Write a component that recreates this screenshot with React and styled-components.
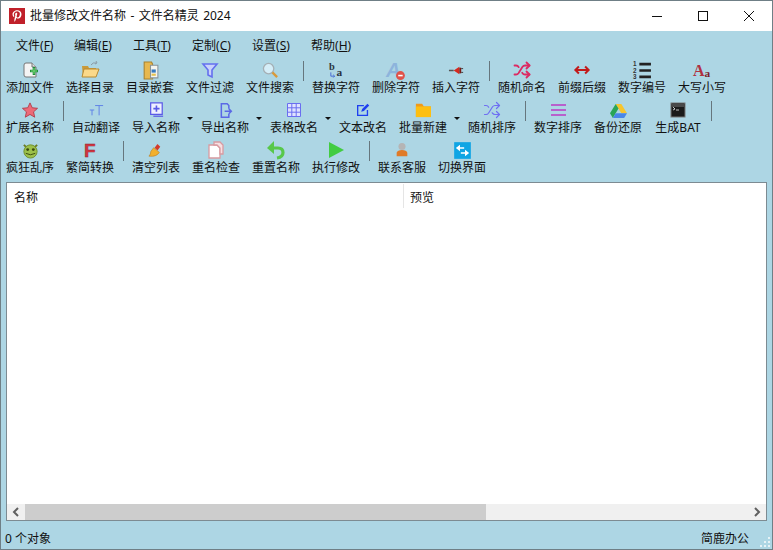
import React from "react";
import styled, { createGlobalStyle } from "styled-components";
import { FaPinterestP } from "react-icons/fa";
import { Shuffle } from "lucide-react";

const GlobalStyle = createGlobalStyle`
  html, body { margin: 0; padding: 0; }
  body { font-family: "Noto Sans", "Noto Sans CJK SC", sans-serif; font-size: 12px; color: #111; }
`;

const Window = styled.div`
  position: relative;
  width: 773px;
  height: 550px;
  box-sizing: border-box;
  display: flex;
  flex-direction: column;
  background: #add6e4;
  box-shadow: inset 0 0 0 1px #6f7f86;
  overflow: hidden;
`;
const TitleBar = styled.div`
  height: 30px;
  margin: 1px 1px 0;
  flex: none;
  display: flex;
  align-items: center;
  background: #fff;
`;
const AppLogo = styled.span`
  width: 16px;
  height: 16px;
  margin-left: 8px;
  background: #c0202a;
  color: #fff;
  display: flex;
  align-items: center;
  justify-content: center;
  font-size: 12px;
`;
const TitleText = styled.span`
  margin-left: 5px;
  flex: 1;
  line-height: 30px;
  word-spacing: 1.3px;
`;
const WinButton = styled.button`
  width: 46px;
  height: 30px;
  padding: 0;
  border: 0;
  background: transparent;
  display: flex;
  align-items: center;
  justify-content: center;
`;
const MenuBar = styled.div`
  height: 27px;
  flex: none;
  display: flex;
  align-items: center;
  padding-left: 16px;
`;
const MenuItem = styled.span`
  width: 59px;
  flex: none;
  white-space: nowrap;
  u { text-underline-offset: 1px; }
  &:first-child { width: 58px; }
  &:nth-child(4) { width: 60px; }
`;
const ToolRow = styled.div`
  height: 40px;
  flex: none;
  display: flex;
`;
const ToolButton = styled.div`
  width: 60px;
  flex: none;
  display: flex;
  flex-direction: column;
  align-items: center;
`;
const IconBox = styled.span`
  height: 20px;
  margin-top: 2px;
  display: flex;
  align-items: center;
  justify-content: center;
`;
const ToolLabel = styled.span`
  height: 18px;
  margin-top: -1px;
  line-height: 18px;
  white-space: nowrap;
`;
const Separator = styled.span`
  width: 6px;
  flex: none;
  height: 20px;
  margin-top: 3px;
  display: flex;
  justify-content: center;
  &::before {
    content: "";
    width: 1px;
    background: #66767d;
  }
`;
const DropArrow = styled.span`
  width: 9px;
  flex: none;
  &::before {
    content: "";
    display: block;
    width: 0;
    margin: 19px 0 0 1px;
    border-left: 3px solid transparent;
    border-right: 3px solid transparent;
    border-top: 3px solid #111;
  }
`;
const ListPanel = styled.div`
  margin: 4px 6px 0;
  height: 339px;
  flex: none;
  box-sizing: border-box;
  border: 1px solid #7d8b92;
  background: #fff;
  display: flex;
  flex-direction: column;
`;
const ListHeader = styled.div`
  height: 29px;
  flex: none;
  display: grid;
  grid-template-columns: 397px 1fr;
`;
const HeaderCell = styled.div`
  padding-left: ${(p) => p.$pad}px;
  line-height: 27px;
  height: 24px;
  margin-top: 1px;
  border-right: ${(p) => (p.$divider ? "1px solid #e5e5e5" : "0")};
`;
const ListBody = styled.div`
  flex: 1;
`;
const ScrollBar = styled.div`
  height: 16px;
  flex: none;
  display: flex;
  background: #f0f0f0;
`;
const ScrollEnd = styled.span`
  width: 18px;
  flex: none;
  display: flex;
  align-items: center;
  justify-content: center;
`;
const ScrollTrack = styled.div`
  flex: 1;
`;
const ScrollThumb = styled.div`
  width: 461px;
  height: 100%;
  background: #cdcdcd;
`;
const StatusBar = styled.div`
  flex: 1;
  display: flex;
  align-items: center;
  justify-content: space-between;
  padding: 4px 24px 0 5px;
`;
const Grip = styled.svg`
  position: absolute;
  right: 2px;
  bottom: 2px;
`;

const Svg = ({ children, size = 17 }) => (
  <svg width={size} height={size} viewBox="1 1 18 18" overflow="visible">{children}</svg>
);

const icons = {
  addFile: (
    <Svg size={18}>
      <path d="M6 3h6l4 4v10H6q-2 0-2-2V5q0-2 2-2z" fill="#f4f4f4" stroke="#777" />
      <path d="M12 3v4h4" fill="#ddd" stroke="#777" />
      <path d="M14 7v8M10 11h8" stroke="#1f8f3a" strokeWidth="2.6" />
      <path d="M14 8v6M11 11h6" stroke="#7fdc7a" strokeWidth="1" />
    </Svg>
  ),
  folderOpen: (
    <Svg size={18}>
      <path d="M2 6h6l1 2h7v9H3z" fill="#c99a3a" />
      <path d="M4 9h15l-3 8H2z" fill="#fbd98a" stroke="#b98a30" />
      <path d="M11 5q2-3 5-2M16 1l1 2-2 1" fill="none" stroke="#8a9aa5" />
    </Svg>
  ),
  folderNest: (
    <Svg size={19}>
      <path d="M4 2h7l1 2v14H4z" fill="#e8b84e" stroke="#a9812c" />
      <path d="M10 5h7v12h-7z" fill="#f5f5f0" stroke="#8a949a" />
      <path d="M11 9h4v3h-4z" fill="#3a7cc0" />
      <path d="M11 13h4v2h-4z" fill="#e6c04c" />
    </Svg>
  ),
  funnel: (
    <Svg size={18}>
      <path d="M3 4h14l-5 6v7l-4-2v-5z" fill="#c9d2fb" stroke="#6470ee" strokeWidth="1.6" />
    </Svg>
  ),
  search: (
    <Svg>
      <circle cx="8" cy="8" r="5.5" fill="#d5eef8" stroke="#a5b0b5" strokeWidth="1.4" />
      <path d="M12 12l5 5" stroke="#d99a3a" strokeWidth="2.4" />
    </Svg>
  ),
  replace: (
    <Svg>
      <text x="2" y="10" fontFamily="Liberation Serif, serif" fontWeight="700" fontSize="11" fill="#2b3340">b</text>
      <text x="10" y="16" fontFamily="Liberation Serif, serif" fontWeight="700" fontSize="12" fill="#2b3340">a</text>
      <path d="M4 12v4h4M6.500 14.500L8 16l-1.500 1.500" fill="none" stroke="#3c5fd0" strokeWidth="0.9" />
    </Svg>
  ),
  deleteChar: (
    <Svg size={20}>
      <text x="1" y="16" fontFamily="Liberation Sans, sans-serif" fontWeight="700" fontStyle="italic" fontSize="18" fill="#8db4dc">A</text>
      <circle cx="14" cy="15" r="4" fill="#e0524a" />
      <path d="M12 15h4" stroke="#fff" strokeWidth="1.4" />
    </Svg>
  ),
  insertChar: (
    <Svg>
      <path d="M2 10h5" stroke="#555" strokeWidth="1.6" />
      <path d="M7 10l6-4v8z" fill="#d42a20" />
      <path d="M13 7h2v6h-2z" fill="#7a1a14" />
      <path d="M15 8h2M15 12h2" stroke="#333" />
    </Svg>
  ),
  shuffleRed: <Shuffle size={18} color="#dc2a62" strokeWidth={2.4} />,
  shuffleBlue: <Shuffle size={18} color="#6e6ef2" strokeWidth={1.6} />,
  prefix: (
    <Svg size={16}>
      <path d="M3 10h14" stroke="#c21a1a" strokeWidth="2.2" />
      <path d="M6.500 6L2.500 10l4 4M13.500 6l4 4-4 4" fill="none" stroke="#c21a1a" strokeWidth="2.2" />
    </Svg>
  ),
  numbers: (
    <Svg size={19}>
      <g fontFamily="Liberation Sans, sans-serif" fontWeight="700" fontSize="6" fill="#333">
        <text x="1" y="6">1</text>
        <text x="1" y="12">2</text>
        <text x="1" y="18">3</text>
      </g>
      <path d="M7 4h11M7 10h11M7 16h11" stroke="#222" strokeWidth="2.6" />
    </Svg>
  ),
  caseChange: (
    <Svg>
      <text x="0" y="16" fontFamily="Liberation Serif, serif" fontWeight="700" fontSize="17" fill="#b03040">A</text>
      <text x="12" y="17" fontFamily="Liberation Serif, serif" fontWeight="700" fontSize="12" fill="#7a1f2c">a</text>
    </Svg>
  ),
  star: (
    <Svg size={16}>
      <path d="M10 2l2.500 5.500 6 .6-4.500 4 1.300 6L10 15l-5.300 3.100 1.300-6-4.500-4 6-.6z" fill="#ec6a78" stroke="#b03a48" />
    </Svg>
  ),
  fontSize: (
    <Svg size={16}>
      <path d="M3 10h5M5.500 10v6M9 5h9M13.500 5v11" fill="none" stroke="#5f82e6" strokeWidth="1.100" />
    </Svg>
  ),
  importName: (
    <Svg size={16}>
      <path d="M4 2h13v13H4z" fill="#eef0ff" stroke="#5a5ae6" strokeWidth="1.400" />
      <path d="M7 17h11" stroke="#5a5ae6" strokeWidth="1.400" />
      <path d="M7 8.500h7M10.500 5v7" stroke="#5a5ae6" strokeWidth="1.800" />
    </Svg>
  ),
  exportName: (
    <Svg size={15}>
      <path d="M14 8V4l-2-2H5v16h9v-4" fill="none" stroke="#5a68e6" strokeWidth="1.800" />
      <path d="M9 11h8M14 8l3 3-3 3" fill="none" stroke="#5a68e6" strokeWidth="1.800" />
    </Svg>
  ),
  table: (
    <Svg size={18}>
      <path d="M3.500 3.500h13v13h-13zM3.500 7.800h13M3.500 12.200h13M7.800 3.500v13M12.200 3.500v13" fill="#dfe2ff" stroke="#6a6ef0" />
    </Svg>
  ),
  textEdit: (
    <Svg size={16}>
      <path d="M15 10v6H4V5h7" fill="none" stroke="#1e3ff0" strokeWidth="1.500" />
      <path d="M8 12l1-3 6-6 2 2-6 6z" fill="#1e3ff0" />
    </Svg>
  ),
  folder: (
    <Svg size={16}>
      <path d="M2 3h7l2 3h8v12H2z" fill="#f09a1a" />
      <path d="M2 6h17v12H2z" fill="#fdbf11" />
    </Svg>
  ),
  bars: (
    <Svg size={18}>
      <path d="M3 5h15M3 10h15M3 15h15" stroke="#b860cc" strokeWidth="2" />
    </Svg>
  ),
  drive: (
    <Svg size={17}>
      <path d="M7 3h6l6 10h-6z" fill="#f7c52d" />
      <path d="M7 3L1 13l3 5 6-10z" fill="#2aa557" />
      <path d="M7 13h12l-3 5H4z" fill="#4a86e8" />
    </Svg>
  ),
  terminal: (
    <Svg size={18}>
      <rect x="3" y="3" width="14" height="14" fill="#1b1b1b" stroke="#777" />
      <rect x="4" y="4" width="12" height="3" fill="#4a4a4a" />
      <path d="M5 7l2 2-2 1M8 10h3" fill="none" stroke="#eee" strokeWidth="0.800" />
    </Svg>
  ),
  monster: (
    <Svg size={17}>
      <path d="M3 4l3 3M17 4l-3 3" stroke="#6a7a20" strokeWidth="2" />
      <circle cx="10" cy="11" r="7" fill="#9cc04a" stroke="#6f8f2c" />
      <circle cx="7" cy="9" r="1.500" fill="#3a4a10" />
      <circle cx="13" cy="9" r="1.500" fill="#3a4a10" />
      <path d="M5 13q5 3 10 0" fill="none" stroke="#3a4a10" />
    </Svg>
  ),
  bigF: (
    <Svg size={18}>
      <text x="4" y="17" fontFamily="Liberation Sans, sans-serif" fontWeight="700" fontSize="19" fill="#cf3540" stroke="#8f1f2a" strokeWidth="0.400">F</text>
    </Svg>
  ),
  broom: (
    <Svg size={17}>
      <path d="M11 3l3 3-3 4-3-3z" fill="#d43a2a" />
      <path d="M7 7l6 5q-3 5-11 4q2-2 2-5z" fill="#f2b02e" stroke="#b9791a" strokeWidth="0.600" />
    </Svg>
  ),
  copy: (
    <Svg size={18}>
      <path d="M3 5h8l3 3v10H3z" fill="#fff" stroke="#d89aa0" strokeWidth="1.300" />
      <path d="M8 2h6l3 3v9h-3V8l-3-3H8z" fill="#f7dfe2" stroke="#d89aa0" strokeWidth="1.300" />
    </Svg>
  ),
  undo: (
    <Svg size={18}>
      <path d="M6 8h6q5 0 5 4.500T11 18" fill="none" stroke="#58c84a" strokeWidth="3.200" />
      <path d="M8 1v13L1 8z" fill="#58c84a" />
    </Svg>
  ),
  play: (
    <Svg size={18}>
      <path d="M3 2l15 8-15 8z" fill="#42cc42" />
    </Svg>
  ),
  agent: (
    <Svg size={16}>
      <circle cx="10" cy="6" r="4" fill="#b5b5b5" />
      <path d="M4 17v-4q1-3 6-3t6 3v4z" fill="#e07b28" />
    </Svg>
  ),
  swap: (
    <Svg size={15}>
      <rect width="20" height="20" fill="#0ea5e4" />
      <path d="M12 6H7V3L2 7l5 4V8h5zM8 14h5v3l5-4-5-4v3H8z" fill="#fff" />
    </Svg>
  ),
};

const rows = [
  [
    ["添加文件", "addFile"], ["选择目录", "folderOpen"], ["目录嵌套", "folderNest"], ["文件过滤", "funnel"], ["文件搜索", "search"], "sep",
    ["替换字符", "replace"], ["删除字符", "deleteChar"], ["插入字符", "insertChar"], "sep",
    ["随机命名", "shuffleRed"], ["前缀后缀", "prefix"], ["数字编号", "numbers"], ["大写小写", "caseChange"],
  ],
  [
    ["扩展名称", "star"], "sep",
    ["自动翻译", "fontSize"], ["导入名称", "importName"], "arrow", ["导出名称", "exportName"], "arrow", ["表格改名", "table"], "arrow",
    ["文本改名", "textEdit"], ["批量新建", "folder"], "arrow", ["随机排序", "shuffleBlue"], "sep",
    ["数字排序", "bars"], ["备份还原", "drive"], ["生成BAT", "terminal"], "sep",
  ],
  [
    ["疯狂乱序", "monster"], ["繁简转换", "bigF"], "sep",
    ["清空列表", "broom"], ["重名检查", "copy"], ["重置名称", "undo"], ["执行修改", "play"], "sep",
    ["联系客服", "agent"], ["切换界面", "swap"],
  ],
];

const menus = [["文件", "F"], ["编辑", "E"], ["工具", "T"], ["定制", "C"], ["设置", "S"], ["帮助", "H"]];

const App = () => (
  <Window>
    <GlobalStyle />
    <TitleBar>
      <AppLogo><FaPinterestP /></AppLogo>
      <TitleText>批量修改文件名称 - 文件名精灵 2024</TitleText>
      <WinButton>
        <svg width="10" height="10"><path d="M0 5.500h10" stroke="#111" /></svg>
      </WinButton>
      <WinButton>
        <svg width="10" height="10"><rect x=".5" y=".5" width="9" height="9" fill="none" stroke="#111" /></svg>
      </WinButton>
      <WinButton>
        <svg width="10" height="10"><path d="M0 0l10 10M10 0L0 10" stroke="#111" /></svg>
      </WinButton>
    </TitleBar>
    <MenuBar>
      {menus.map(([name, key]) => (
        <MenuItem key={key}>{name}(<u>{key}</u>)</MenuItem>
      ))}
    </MenuBar>
    {rows.map((row, i) => (
      <ToolRow key={i}>
        {row.map((item, j) => {
          if (item === "sep") return <Separator key={j} />;
          if (item === "arrow") return <DropArrow key={j} />;
          return (
            <ToolButton key={j}>
              <IconBox>{icons[item[1]]}</IconBox>
              <ToolLabel>{item[0]}</ToolLabel>
            </ToolButton>
          );
        })}
      </ToolRow>
    ))}
    <ListPanel>
      <ListHeader>
        <HeaderCell $pad={7} $divider>名称</HeaderCell>
        <HeaderCell $pad={6}>预览</HeaderCell>
      </ListHeader>
      <ListBody />
      <ScrollBar>
        <ScrollEnd>
          <svg width="8" height="10"><path d="M6 1L2 5l4 4" fill="none" stroke="#606060" strokeWidth="2" /></svg>
        </ScrollEnd>
        <ScrollTrack><ScrollThumb /></ScrollTrack>
        <ScrollEnd>
          <svg width="8" height="10"><path d="M2 1l4 4-4 4" fill="none" stroke="#606060" strokeWidth="2" /></svg>
        </ScrollEnd>
      </ScrollBar>
    </ListPanel>
    <StatusBar>
      <span>0 个对象</span>
      <span>简鹿办公</span>
    </StatusBar>
    <Grip width="12" height="12" fill="#e6f2f6">
      <rect x="9" y="1" width="2" height="2" />
      <rect x="5" y="5" width="2" height="2" />
      <rect x="9" y="5" width="2" height="2" />
      <rect x="1" y="9" width="2" height="2" />
      <rect x="5" y="9" width="2" height="2" />
      <rect x="9" y="9" width="2" height="2" />
    </Grip>
  </Window>
);

export default App;
